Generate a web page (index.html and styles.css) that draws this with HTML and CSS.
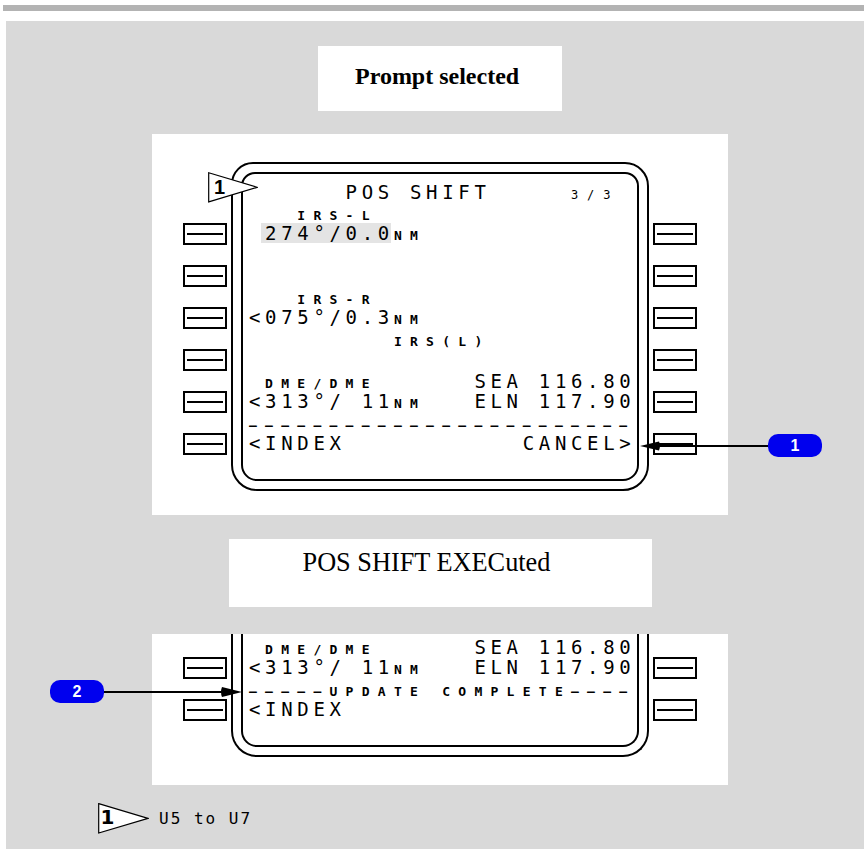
FILE: index.html
```html
<!DOCTYPE html>
<html lang="en">
<head>
    <meta charset="UTF-8">
    <title>POS SHIFT</title>
    <link rel="stylesheet" href="styles.css">
</head>
<body>
<div class="topbar"></div>
<div class="panel">
    <div class="col">
        <div class="caption caption-bold">Prompt selected</div>

        <div class="card card-full">
            <div class="keys keys-full">
                <span class="key"></span><span class="key"></span><span class="key"></span>
                <span class="key"></span><span class="key"></span><span class="key"></span>
            </div>
            <div class="bezel">
                <div class="screen">
                    <div class="title">      POS SHIFT     <span class="sm page">3/3</span></div>
                    <div class="lbl">   IRS-L</div>
                    <div class="dat"> <span class="hl">274°/0.0</span><span class="sm">NM</span></div>
                    <div class="lbl"></div>
                    <div class="dat"></div>
                    <div class="lbl">   IRS-R</div>
                    <div class="dat">&lt;075°/0.3<span class="sm">NM</span></div>
                    <div class="lbl">         IRS(L)</div>
                    <div class="dat"></div>
                    <div class="lbl"> DME/DME      <span class="lg">SEA 116.80</span></div>
                    <div class="dat">&lt;313°/ 11<span class="sm">NM</span>   ELN 117.90</div>
                    <div class="lbl">––––––––––––––––––––––––</div>
                    <div class="dat">&lt;INDEX           CANCEL&gt;</div>
                </div>
            </div>
            <div class="keys keys-full">
                <span class="key"></span><span class="key"></span><span class="key"></span>
                <span class="key"></span><span class="key"></span><span class="key"></span>
            </div>

            <svg class="flag" width="50" height="31" viewBox="0 0 50 31">
                <polygon points="0.7,0.7 49.3,15.3 0.7,29.9" fill="#fff" stroke="#000" stroke-width="1.2"/>
                <text x="6" y="22" class="flag-num">1</text>
            </svg>

            <div class="callout callout-1">
                <svg width="128" height="12" viewBox="0 0 128 12">
                    <path d="M0 6 L19 1.5 Q21 6 19 10.5 Z" fill="#000"/>
                    <path d="M18 6 H128" stroke="#000" stroke-width="2"/>
                </svg>
                <span class="pill">1</span>
            </div>
        </div>

        <div class="caption caption-plain">POS SHIFT EXECuted</div>

        <div class="card card-cut">
            <div class="keys keys-cut">
                <span class="key"></span><span class="key"></span>
            </div>
            <div class="bezel bezel-cut">
                <div class="screen screen-cut">
                    <div class="lbl"> DME/DME      <span class="lg">SEA 116.80</span></div>
                    <div class="dat">&lt;313°/ 11<span class="sm">NM</span>   ELN 117.90</div>
                    <div class="lbl">–––––UPDATE COMPLETE––––</div>
                    <div class="dat">&lt;INDEX</div>
                </div>
            </div>
            <div class="keys keys-cut">
                <span class="key"></span><span class="key"></span>
            </div>

            <div class="callout callout-2">
                <span class="pill">2</span>
                <svg width="138" height="12" viewBox="0 0 138 12">
                    <path d="M0 6 H120" stroke="#000" stroke-width="2"/>
                    <path d="M138 6 L118 1 Q116 6 118 11 Z" fill="#000"/>
                </svg>
            </div>
        </div>
    </div>

    <div class="note">
        <svg width="51" height="31" viewBox="0 0 51 31">
            <polygon points="0.7,0.7 50,15.3 0.7,30" fill="#fff" stroke="#000" stroke-width="1.2"/>
            <text x="2.5" y="21" class="note-num">1</text>
        </svg>
        <span class="note-text">U5 to U7</span>
    </div>
</div>
</body>
</html>
```

FILE: styles.css
```css
*{margin: 0;padding: 0;box-sizing: border-box;}
body{width: 864px;background: #fff;font-family: "Liberation Sans", Arial, sans-serif;}

.topbar{height: 6px;margin: 5px 0 10px 3px;background: #b3b3b3;}
.panel{margin-left: 6px;min-height: 828px;padding-top: 25px;background: #d9d9d9;}
.col{
    width: 576px;
    margin-left: 146px;
    display: flex;
    flex-direction: column;
    align-items: center;
}

/* captions */
.caption{background: #fff;font-family: "Liberation Serif", "Times New Roman", serif;color: #000;white-space: nowrap;}
.caption-bold{
    width: 244px;
    height: 65px;
    padding: 17px 0 0 37px;
    font-size: 24px;
    font-weight: bold;
}
.caption-plain{
    width: 423px;
    height: 68px;
    margin-top: 24px;
    padding: 9px 0 0 74px;
    font-size: 26.3px;
}

/* CDU cards */
.card{
    position: relative;
    width: 576px;
    background: #fff;
    display: flex;
    justify-content: center;
    align-items: flex-start;
    gap: 4px;
}
.card-full{margin-top: 23px;padding: 28px 0 24px;}
.card-cut{margin-top: 27px;padding: 0 0 28px;}

.keys{width: 44px;display: flex;flex-direction: column;gap: 20px;}
.keys-full{margin-top: 61px;}
.keys-cut{margin-top: 23px;}
.key{
    display: block;
    width: 44px;
    height: 22px;
    border: 2px solid #000;
    padding: 8px 2px 0;
}
.key::after{content: "";display: block;height: 2px;background: #000;}

.bezel{
    width: 418px;
    border: 2px solid #000;
    border-radius: 22px 24px 26px 26px;
    padding: 8px;
}
.bezel-cut{border-top: 0;border-radius: 0 0 26px 26px;padding-top: 0;}

.screen{
    border: 2px solid #000;
    border-radius: 14px 14px 16px 16px;
    padding: 2px 0 18px 6px;
    font-family: "DejaVu Sans Mono", monospace;
    font-size: 19px;
    color: #000;
}
.screen-cut{border-top: 0;border-radius: 0 0 16px 16px;padding-top: 9px;}

.screen,.lbl,.sm,.lg{letter-spacing: calc(16.1px - 1ch);}
.title,.lbl,.dat{white-space: pre;}
.title{height: 33px;line-height: 33px;}
.lbl{height: 14px;line-height: 14px;font-size: 13px;font-weight: bold;}
.dat{height: 28px;line-height: 20px;padding-bottom: 8px;}
.sm{font-size: 13px;line-height: 1;font-weight: bold;}
.page{font-size: 12px;font-weight: normal;}
.lg{font-size: 19px;line-height: 0;font-weight: normal;}
.hl{
    display: inline-block;
    margin-left: -4px;
    padding-left: 4px;
    background: linear-gradient(#e4e4e4, #e4e4e4) left top / calc(100% - 3px) 100% no-repeat;
}

/* callouts */
.flag{position: absolute;left: 56px;top: 38px;}
.flag-num{font-family: "Liberation Sans", Arial, sans-serif;font-weight: bold;font-size: 20px;fill: #000;}

.callout{position: absolute;display: flex;align-items: center;}
.callout svg{display: block;}
.callout-1{left: 488px;top: 300px;}
.callout-2{left: -102px;top: 46px;}
.pill{
    display: flex;
    align-items: center;
    justify-content: center;
    width: 54px;
    height: 23px;
    border-radius: 10px;
    background: #0000ee;
    color: #fff;
    font: bold 16px "Liberation Sans", Arial, sans-serif;
}

/* footnote */
.note{display: flex;align-items: center;margin: 18px 0 0 92px;}
.note svg{display: block;}
.note-num{font-family: "DejaVu Sans", sans-serif;font-weight: bold;font-size: 20px;fill: #000;}
.note-text{
    margin-left: 10px;
    font-family: "DejaVu Sans Mono", monospace;
    font-size: 16px;
    letter-spacing: 2px;
    color: #000;
}
```
